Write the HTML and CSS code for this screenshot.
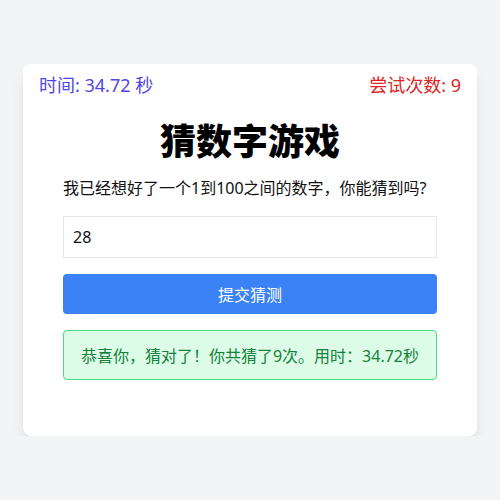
FILE: index.html
```html
<!DOCTYPE html>
<html lang="zh-CN">
<head>
    <meta charset="UTF-8">
    <meta name="viewport" content="width=device-width,initial-scale=1.0" />
    <title>猜数字游戏</title>
    <link rel="stylesheet" href="styles.css">
</head>
<body>
    <div class="card">
        <div class="stats">
            <span class="timer">时间: 34.72 秒</span>
            <span class="tries">尝试次数: 9</span>
        </div>
        <h1 class="title">猜数字游戏</h1>
        <div class="game">
            <p class="intro">我已经想好了一个1到100之间的数字，你能猜到吗?</p>
            <input class="guess" type="text" value="28" />
            <button class="submit">提交猜测</button>
            <div class="message">恭喜你，猜对了！你共猜了9次。用时：34.72秒</div>
        </div>
    </div>
</body>
</html>
```

FILE: styles.css
```css
body {
    margin: 0;
    background: #f3f4f6;
    font-family: "Noto Sans", "Noto Sans CJK SC", sans-serif;
    color: #111;
}
.card {
    width: 454px;
    margin: 64px auto 0;
    box-sizing: border-box;
    padding: 8px 16px 56px;
    background: #fff;
    border-radius: 8px;
    box-shadow: 0 10px 15px -3px rgba(0, 0, 0, 0.1), 0 4px 6px -4px rgba(0, 0, 0, 0.1);
}
.stats {
    display: flex;
    justify-content: space-between;
    font-size: 18px;
    line-height: 27px;
}
.timer {
    color: #4f46e5;
}
.tries {
    color: #dc2626;
}
.title {
    margin: 21px 0 0;
    text-align: center;
    font-size: 36px;
    line-height: 43px;
    font-weight: 800;
    color: #000;
}
.game {
    margin: 0 24px;
}
.intro {
    margin: 13px 0 0;
    font-size: 16px;
    line-height: 24px;
}
.guess {
    display: block;
    width: 100%;
    height: 42px;
    margin: 16px 0 0;
    padding: 0 9px;
    box-sizing: border-box;
    border: 1px solid #e5e7eb;
    outline: none;
    font: inherit;
    font-size: 16px;
    color: #111;
}
.submit {
    display: block;
    width: 100%;
    height: 40px;
    margin: 16px 0 0;
    border: none;
    border-radius: 4px;
    background: #3b82f6;
    color: #fff;
    font: inherit;
    font-size: 16px;
}
.message {
    margin-top: 16px;
    height: 50px;
    box-sizing: border-box;
    border: 1px solid #4ade80;
    border-radius: 4px;
    background: #dcfce7;
    color: #15803d;
    font-size: 16px;
    display: flex;
    align-items: center;
    justify-content: center;
}
```
